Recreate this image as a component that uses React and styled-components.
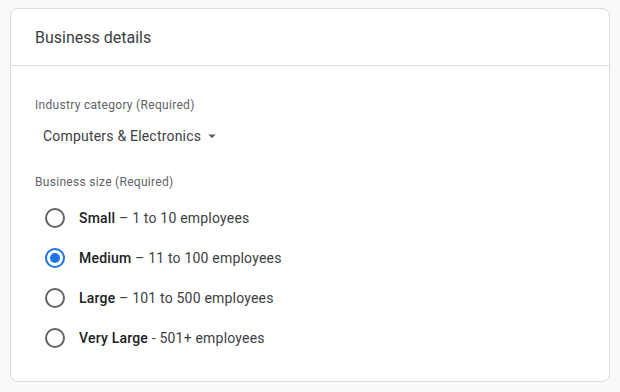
import React, { useState } from 'react';
import styled, { createGlobalStyle } from 'styled-components';

const GlobalStyle = createGlobalStyle`
  body {
    margin: 0;
    background: #f8f9fa;
    font-family: Roboto, "Liberation Sans", Arial, sans-serif;
  }
`;

const Page = styled.div`
  padding: 8px 10px 9px 10px;
`;

const Card = styled.section`
  width: 600px;
  box-sizing: border-box;
  background: #fff;
  border: 1px solid #dadce0;
  border-radius: 8px;
`;

const Header = styled.header`
  height: 56px;
  display: flex;
  align-items: center;
  padding: 0 24px;
  border-bottom: 1px solid #dadce0;
  font-size: 16px;
  color: #3c4043;
`;

const Body = styled.div`
  padding: 31px 24px 23px 24px;
  display: flex;
  flex-direction: column;
`;

const Label = styled.div`
  font-size: 12px;
  line-height: 16px;
  letter-spacing: 0.3px;
  color: #5f6368;
  margin-top: ${(p) => p.$top || 0}px;
`;

const Dropdown = styled.button`
  display: inline-flex;
  align-items: center;
  align-self: flex-start;
  height: 36px;
  margin-top: 5px;
  padding: 0 8px;
  border: none;
  background: none;
  font: inherit;
  font-size: 14px;
  letter-spacing: 0.2px;
  color: #3c4043;
  cursor: pointer;
  svg {
    margin-left: 2px;
  }
`;

const RadioList = styled.div`
  display: flex;
  flex-direction: column;
  margin-top: 8px;
`;

const Row = styled.label`
  display: flex;
  align-items: center;
  height: 40px;
  cursor: pointer;
  font-size: 14px;
  letter-spacing: 0.2px;
  color: #3c4043;
`;

const Target = styled.span`
  width: 40px;
  height: 40px;
  display: flex;
  align-items: center;
  justify-content: center;
  margin-right: 4px;
`;

const Circle = styled.span`
  width: 20px;
  height: 20px;
  box-sizing: border-box;
  border-radius: 50%;
  border: 2px solid ${(p) => (p.$checked ? '#1a73e8' : '#5f6368')};
  display: flex;
  align-items: center;
  justify-content: center;
  &::after {
    content: '';
    width: 10px;
    height: 10px;
    border-radius: 50%;
    background: #1a73e8;
    display: ${(p) => (p.$checked ? 'block' : 'none')};
  }
`;

const Strong = styled.b`
  font-weight: 500;
  color: #202124;
`;

const sizes = [
  { name: 'Small', sep: '–', text: '1 to 10 employees' },
  { name: 'Medium', sep: '–', text: '11 to 100 employees' },
  { name: 'Large', sep: '–', text: '101 to 500 employees' },
  { name: 'Very Large', sep: '-', text: '501+ employees' },
];

const Caret = () => (
  <svg width="18" height="18" viewBox="0 0 24 24" fill="#5f6368">
    <path d="M7 10l5 5 5-5z" />
  </svg>
);

export default function App() {
  const [size, setSize] = useState('Medium');
  return (
    <Page>
      <GlobalStyle />
      <Card>
        <Header>Business details</Header>
        <Body>
          <Label>Industry category (Required)</Label>
          <Dropdown>
            Computers &amp; Electronics
            <Caret />
          </Dropdown>
          <Label $top={20}>Business size (Required)</Label>
          <RadioList>
            {sizes.map((s) => (
              <Row key={s.name} onClick={() => setSize(s.name)}>
                <Target>
                  <Circle $checked={size === s.name} />
                </Target>
                <span>
                  <Strong>{s.name}</Strong> {s.sep} {s.text}
                </span>
              </Row>
            ))}
          </RadioList>
        </Body>
      </Card>
    </Page>
  );
}
